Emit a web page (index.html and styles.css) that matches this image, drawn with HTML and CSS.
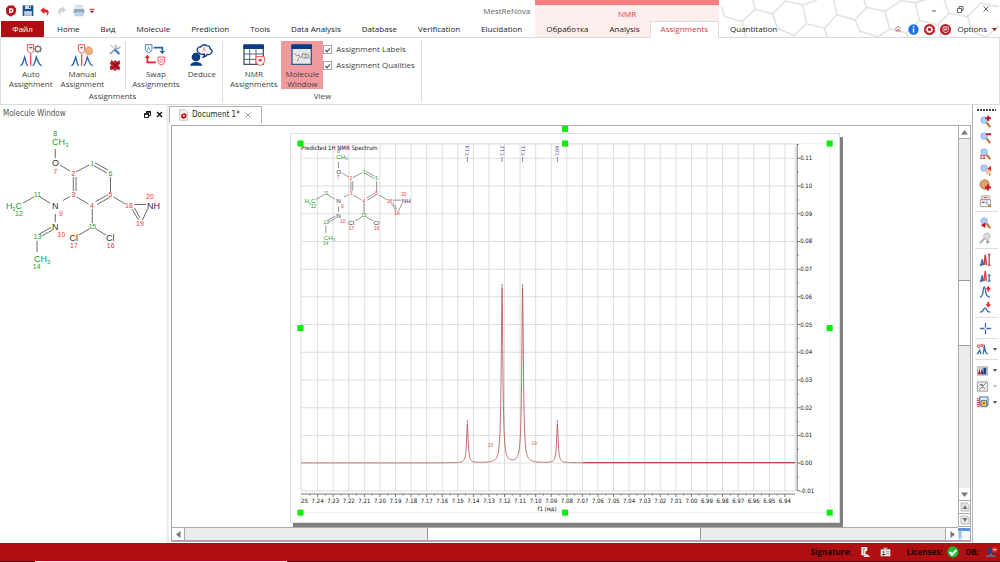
FILE: index.html
```html
<!DOCTYPE html>
<html lang="en">
<head>
<meta charset="utf-8">
<title>MestReNova</title>
<link rel="stylesheet" href="styles.css">
</head>
<body>
<div class="app">
  <header class="header">
    <div class="header-part main-part">
      <div class="title-row">
        <div class="quick">
          <svg width="14" height="14" viewBox="10 9 42 42"><path d="M22 14l16-1 9 11-3 15-14 8-13-9-1-15z" fill="#b5121b"/><path d="M27 37V24h7q5 4 0 9h-6" fill="none" stroke="#fff" stroke-width="4"/></svg>
          <button class="icon-btn" aria-label="Save"><svg width="14" height="14" viewBox="62 9 42 42"><path d="M67 13h32v32H67z" fill="#1f4e8c"/><path d="M74 13h18v11H74z" fill="#cfe0f2"/><path d="M86 15h4v7h-4z" fill="#1f4e8c"/><path d="M71 30h24v15H71z" fill="#9db9d6"/><path d="M74 34h18M74 39h18" stroke="#eef" stroke-width="2"/></svg></button>
          <button class="icon-btn" aria-label="Undo"><svg width="14" height="14" viewBox="113 9 42 42"><path d="M120 28l12-9v6c14-2 18 12 6 21 5-9 2-13-6-12v6z" fill="#e5252b"/></svg></button>
          <button class="icon-btn" aria-label="Redo"><svg width="14" height="14" viewBox="162 9 42 42"><path d="M194 26l-10-9v5c-15-1-17 14-5 20-4-8-2-12 5-11v5z" fill="#d4d4d4" stroke="#bbb"/></svg></button>
          <button class="icon-btn" aria-label="Print"><svg width="14" height="14" viewBox="214 9 42 42"><path d="M225 13h20v12h-20z" fill="#dce9f7" stroke="#9ab"/><path d="M219 24h32v13h-32z" fill="#9aa9b8"/><path d="M226 33h18l4 12h-26z" fill="#b9d7f4" stroke="#9ab"/></svg></button>
          <button class="icon-btn narrow" aria-label="Customize"><svg width="6" height="6" viewBox="0 0 18 18"><path d="M2 2h14v3H2zM2 8h14l-7 8z" fill="#a3262c"/></svg></button>
        </div>
        <span class="app-name">MestReNova</span>
      </div>
      <nav class="tabs">
        <button class="tab file">Файл</button>
        <button class="tab">Home</button><button class="tab">Вид</button><button class="tab">Molecule</button><button class="tab">Prediction</button><button class="tab">Tools</button><button class="tab">Data Analysis</button><button class="tab">Database</button><button class="tab">Verification</button><button class="tab">Elucidation</button>
      </nav>
    </div>
    <div class="header-part context">
      <div class="title-row context-name">NMR</div>
      <nav class="tabs"><button class="tab">Обработка</button><button class="tab">Analysis</button><button class="tab active">Assignments</button></nav>
    </div>
    <div class="header-part rest">
      <svg class="honeycomb" viewBox="0 0 840 112"><g fill="none" stroke="#e3e3e3" stroke-width="5"><path d="M0 20L10 50L63 65L103 28L95 0M63 65L75 112M103 28L155 42"/><path transform="translate(150 0)" d="M45 3L5 42L20 85L70 108L108 72L97 15L45 3L40 -5M97 15L140 0M108 72L163 85L200 45L190 0M163 85L170 112M200 45L255 60L290 22L280 -5M255 60L270 95L325 112L360 88L345 35L290 22M345 35L395 2L437 8L450 62L410 100L360 88M437 8L470 -2M410 100L415 112M450 62L505 75L540 40L525 0M505 75L515 112M540 40L595 50L635 10L690 20M595 50L610 95L650 112L690 80"/></g></svg>
      <div class="title-row window-buttons">
        <button class="icon-btn" aria-label="Minimize"><svg width="8" height="8" viewBox="0 0 8 8"><path d="M2 6h4" stroke="#555"/></svg></button>
        <button class="icon-btn" aria-label="Restore"><svg width="8" height="8" viewBox="0 0 8 8"><path d="M1.500 3.500h4v4h-4zM3 3V1.500h4v4H6" fill="none" stroke="#666"/></svg></button>
        <button class="icon-btn" aria-label="Close"><svg width="8" height="8" viewBox="0 0 8 8"><path d="M1.500 1.500l5 5m0-5l-5 5" stroke="#666"/></svg></button>
      </div>
      <div class="tabs">
        <button class="tab">Quantitation</button>
        <div class="tab-tools">
          <button class="icon-btn" aria-label="Collapse ribbon"><svg width="10" height="10" viewBox="0 0 30 30"><path d="M6 15l9-8 9 8M7 21h16M9 21l6-6 6 6" fill="none" stroke="#b5393f" stroke-width="2"/></svg></button>
          <button class="icon-btn" aria-label="Info"><svg width="11" height="11" viewBox="0 0 32 32"><circle cx="16" cy="16" r="15" fill="#1a73e8"/><path d="M16 13v12M16 6v4" stroke="#fff" stroke-width="4"/></svg></button>
          <button class="icon-btn" aria-label="Settings"><svg width="11" height="11" viewBox="0 0 32 32"><circle cx="16" cy="16" r="16" fill="#b81c25"/><circle cx="16" cy="16" r="7" fill="none" stroke="#fff" stroke-width="4"/><path d="M16 5v4M16 23v4M5 16h4M23 16h4M8 8l3 3M21 21l3 3M24 8l-3 3M11 21l-3 3" stroke="#fff" stroke-width="3"/></svg></button>
          <button class="icon-btn" aria-label="Log"><svg width="11" height="11" viewBox="0 0 32 32"><circle cx="16" cy="16" r="16" fill="#b81c25"/><path d="M9 8h15v14l-6 3h-5l-4-4z" fill="none" stroke="#fff" stroke-width="2"/><path d="M12 12h9M12 16h9M12 20h6" stroke="#fff" stroke-width="2"/></svg></button>
          <button class="options">Options <svg width="5" height="3" viewBox="0 0 10 6"><path d="M0 0h10l-5 6z" fill="#a3161c"/></svg></button>
        </div>
      </div>
    </div>
  </header>

  <section class="ribbon" aria-label="Assignments ribbon">
    <div class="group">
      <div class="group-items">
        <button class="big"><svg width="24" height="24" viewBox="59 129 72 72"><path d="M63 197c8-2 9-14 13-26 4 12 4 24 10 26M100 197c6-2 7-14 11-26 4 12 8 24 16 26" fill="none" stroke="#2565ae" stroke-width="4"/><path d="M94 163v34" stroke="#f04a50" stroke-width="4"/><path d="M84 134h19v18q-3 7-9 8-9-3-10-9z" fill="#fff" stroke="#f0555a" stroke-width="3"/><path d="M90 143h9" stroke="#e5252b" stroke-width="4"/><circle cx="116" cy="147" r="8" fill="#fff" stroke="#7b7b7b" stroke-width="4"/><path d="M116 134v5M116 155v5M103 147h5M124 147h5M107 138l3 3M122 153l3 3M125 138l-3 3M110 153l-3 3" stroke="#7b7b7b" stroke-width="3"/></svg><span>Auto<br>Assignment</span></button>
        <button class="big"><svg width="24" height="24" viewBox="212 129 72 72"><path d="M216 197c8-2 9-14 13-26 4 12 4 24 10 26M253 197c6-2 7-14 11-26 4 12 8 24 16 26" fill="none" stroke="#2565ae" stroke-width="4"/><path d="M247 163v34" stroke="#f04a50" stroke-width="4"/><path d="M237 134h19v18q-3 7-9 8-9-3-10-9z" fill="#fff" stroke="#f0555a" stroke-width="3"/><path d="M243 143h7" stroke="#e5252b" stroke-width="4"/><path d="M254 143q4-4 9 3l2-6q6-2 14 8v12l-10 5q-9-1-12-9l4-2z" fill="#f0b27c" stroke="#cf8a50" stroke-width="2"/></svg><span>Manual<br>Assignment</span></button>
        <div class="stack">
          <button class="icon-btn" aria-label="Assignment settings"><svg width="13" height="13" viewBox="330 128 39 39"><path d="M335 134l10 10" stroke="#8a98a5" stroke-width="3"/><path d="M333 161l18-17" stroke="#8a98a5" stroke-width="5"/><path d="M347 147l14 14" stroke="#3b82d6" stroke-width="7"/><path d="M351 133q-3 8 2 11 7 2 11-5" fill="none" stroke="#a7b3bd" stroke-width="5"/></svg></button>
          <button class="icon-btn" aria-label="Delete assignments"><svg width="13" height="13" viewBox="330 176 39 39"><path d="M337 179l7 5 5-5 5 5 8-4 1 11-4 4 4 6-2 9-8-3-5 6-5-6-8 3-3-9 5-6-4-5z" fill="#b3121a"/><path d="M342 188l14 14M356 188l-14 14" stroke="#8a0c13" stroke-width="3"/><path d="M346 185h6M346 205h6M339 192v6M359 192v6" stroke="#f3d5d6" stroke-width="1"/></svg></button>
        </div>
        <div class="rule"></div>
        <button class="big"><svg width="24" height="24" viewBox="433 129 72 72"><path d="M437 134h20v15q-3 8-10 9-9-3-10-10z" fill="#fff" stroke="#4f83bd" stroke-width="3"/><path d="M443 151l4-10 4 10" fill="none" stroke="#4f83bd" stroke-width="2"/><path d="M462 143h26v14" fill="none" stroke="#1d62b5" stroke-width="5"/><path d="M480 153h16l-8 9z" fill="#1d62b5"/><path d="M443 171v16h26" fill="none" stroke="#e5252b" stroke-width="5"/><path d="M435 174h16l-8-10z" fill="#e5252b"/><path d="M475 171h20v15q-3 8-10 9-9-3-10-10z" fill="#fff" stroke="#f0555a" stroke-width="3"/><path d="M481 178h8v8h-8z" fill="none" stroke="#f0555a" stroke-width="2"/></svg><span>Swap<br>Assignments</span></button>
        <button class="big"><svg width="24" height="24" viewBox="569 129 72 72"><circle cx="587" cy="171" r="13" fill="#0b3c85"/><path d="M569 197q2-11 18-12 17 1 19 12z" fill="#0b3c85"/><path d="M597 160q-10-7-5-15 3-5 9-4 8-11 18-4 10 0 10 9 10 5 4 13-4 7-12 4-4 7-12 8 5-5 3-9-9 3-15-2z" fill="#fff" stroke="#0b3c85" stroke-width="4"/><path d="M604 156q6 0 7-14 2 14 8 14" fill="none" stroke="#f0555a" stroke-width="2"/></svg><span>Deduce</span></button>
      </div>
      <div class="group-name">Assignments</div>
    </div>
    <div class="group view">
      <div class="group-items">
        <button class="big"><svg width="24" height="24" viewBox="65 129 72 72"><path d="M71 136h58v57H71z" fill="#fff" stroke="#48566a" stroke-width="4"/><path d="M71 162h58M71 178h58M88 148v45M107 148v45" stroke="#5a6675" stroke-width="3"/><path d="M69 137q0-4 4-4h54q4 0 4 4v10H69z" fill="#0b3c85"/><path d="M107 170h25v16q-4 9-12 11-11-4-13-12z" fill="#fff" stroke="#f0555a" stroke-width="3"/><path d="M113 184l3-6h10l-3 6z" fill="#e5252b"/></svg><span>NMR<br>Assignments</span></button>
        <button class="big on"><svg width="24" height="24" viewBox="209 129 72 72"><path d="M215 136h58v57H215z" fill="#e7e7e7" stroke="#375a8e" stroke-width="4"/><path d="M213 137q0-4 4-4h54q4 0 4 4v10H213z" fill="#0b3c85"/><path d="M222 160l7 7 7-2 4 7 6-3v-8l8 1 3 7-4 6-7-3M254 162l9 1 2 6-4 6-8-3M236 172l-5 12M265 172l6 4" fill="none" stroke="#666" stroke-width="2"/></svg><span>Molecule<br>Window</span></button>
        <div class="checks">
          <label><input type="checkbox" checked>Assignment Labels</label>
          <label><input type="checkbox" checked>Assignment Qualities</label>
        </div>
      </div>
      <div class="group-name">View</div>
    </div>
  </section>

  <main class="workspace">
    <aside class="dock">
      <div class="dock-title"><span>Molecule Window</span>
        <button class="icon-btn" aria-label="Float"><svg width="7" height="7" viewBox="0 0 7 7"><path d="M.500 3h4v3.500h-4zM2.500 2V.500h4v4H5" fill="none" stroke="#111"/><path d="M0 3h5M2 1h5" stroke="#111" stroke-width="1.500"/></svg></button>
        <button class="icon-btn" aria-label="Close panel"><svg width="7" height="7" viewBox="0 0 7 7"><path d="M1 1l5 5m0-5L1 6" stroke="#111" stroke-width="1.400"/></svg></button>
      </div>
      <svg class="molecule-view" viewBox="0 122 166 150">
        <g id="molecule">
          <path class="bond" d="M55.300 148v9M60 164l10 6M76 171l13-7M95 161.800l13 7.200M94 164.800l13 7.200M110.500 176v15M108 193.700l-12.500 7M109.500 196.500l-12.500 7M73.300 176v14M76 176v14M76.500 196l12 7M70 195.500l-7 4M50 202l-10-6M34 196l-11 6M55.300 213v8M51 226.500l-11.500 6.500M52.500 229l-11 6M37 240v11M92.300 208v14M89 228l-10 6M96 228l10 6M113.500 196l12 7M134 203.500h12M147.500 208l-5 11M132 208l6.500 11M134.500 207l5.500 10"/>
          <g class="atom green"><text x="52" y="144">CH</text><text class="sub" x="65" y="146">3</text><text x="6" y="208">H</text><text class="sub" x="12" y="210">3</text><text x="15.500" y="208">C</text><text x="34" y="261">CH</text><text class="sub" x="47" y="263">3</text></g>
          <g class="atom"><text x="52" y="165">O</text><text x="52" y="208">N</text><text x="52" y="229">N</text><text x="69.500" y="240">Cl</text><text x="106" y="240">Cl</text></g>
          <g class="atom amine"><text x="147" y="208">NH</text></g>
          <g class="num green"><text x="55.300" y="135">8</text><text x="92.300" y="165">1</text><text x="110.500" y="175">6</text><text x="37.500" y="196">11</text><text x="19" y="215">12</text><text x="37.500" y="238">13</text><text x="36.700" y="268">14</text><text x="92.300" y="228">15</text></g>
          <g class="num red"><text x="55.300" y="173">7</text><text x="73.500" y="175">2</text><text x="73.500" y="196">3</text><text x="92" y="207">4</text><text x="110.500" y="196">5</text><text x="61" y="215">9</text><text x="61.500" y="236">10</text><text x="74" y="247">17</text><text x="110.700" y="247">16</text><text x="129" y="207">18</text><text x="140" y="225">19</text><text x="150" y="198">20</text></g>
        </g>
      </svg>
    </aside>

    <section class="documents">
      <div class="doc-tabs">
        <div class="doc-tab">
          <svg width="9" height="12" viewBox="537 22 28 37"><path d="M539 24h17l7 7v26h-24z" fill="#f8f4f4" stroke="#b9a3a3" stroke-width="2"/><path d="M545 38l9-4 7 6-2 9-9 4-7-6z" fill="#c01822"/><circle cx="552" cy="43" r="3" fill="#fff"/></svg>
          <span>Document 1*</span>
          <button class="icon-btn" aria-label="Close document"><svg width="6" height="6" viewBox="0 0 6 6"><path d="M.500.500l5 5m0-5l-5 5" stroke="#999"/></svg></button>
        </div>
      </div>
      <div class="frame">
        <div class="canvas">
          <div class="page">
            <svg class="plot" viewBox="291 133 548 388" role="img" aria-label="Predicted 1H NMR Spectrum">
              <path class="faint" d="M301 142.500h529v369H301z"/>
              <g id="grid"></g>
              <text class="caption" x="301" y="149">Predicted 1H NMR Spectrum</text>
              <use href="#molecule" transform="translate(300.300 58.700) scale(.69)"/>
              <g id="peaks"></g>
              <path id="trace" class="trace"/>
              <path class="trace heavy" d="M583 461.500H795"/>
              <g class="assign"><text x="490.500" y="446">20</text><text x="534" y="444">19</text></g>
              <text class="tick" x="547" y="510" text-anchor="middle">f1 (мд)</text>
              <g id="handles" class="handle"></g>
            </svg>
          </div>
        </div>
        <div class="vbar">
          <button class="sb" aria-label="Scroll up"><svg width="7" height="5" viewBox="0 0 7 5"><path d="M0 4.500h7L3.500 0z"/></svg></button>
          <div class="track a"></div><div class="thumb"></div><div class="track b"></div>
          <button class="sb" aria-label="Scroll down"><svg width="7" height="5" viewBox="0 0 7 5"><path d="M0 .500h7L3.500 5z"/></svg></button>
          <button class="sb pg" aria-label="Previous page"><svg width="10" height="10" viewBox="0 0 10 10"><path class="sheet" d="M1 1h6l2 2v6H1z"/><path d="M2.500 7h5L5 3z"/></svg></button>
          <button class="sb pg" aria-label="Next page"><svg width="10" height="10" viewBox="0 0 10 10"><path class="sheet" d="M1 1h6l2 2v6H1z"/><path d="M2.500 3h5L5 7z"/></svg></button>
        </div>
        <div class="hbar">
          <button class="sb" aria-label="Scroll left"><svg width="5" height="7" viewBox="0 0 5 7"><path d="M4.500 0v7L0 3.500z"/></svg></button>
          <div class="track a"></div><div class="thumb"></div><div class="track b"></div>
          <button class="sb" aria-label="Scroll right"><svg width="5" height="7" viewBox="0 0 5 7"><path d="M.500 0v7L5 3.500z"/></svg></button>
        </div>
        <button class="corner" aria-label="Page navigator"><svg width="12" height="12" viewBox="0 0 12 12"><path fill="#5b93dc" d="M0 0h12v3H0z"/><path fill="#c9dcf3" d="M0 3h4v9H0z"/><path fill="#f4f8fd" d="M4 3h7v8H4z"/><path d="M1 5h2M1 8h2" stroke="#6d7f95"/></svg></button>
      </div>
    </section>

    <nav class="toolbar" aria-label="Zoom tools">
      <div class="grip"></div>
      <button aria-label="Zoom in"><svg viewBox="0 0 14 14"><g id="lens"><path d="M8 8l4 5" stroke="#c07030" stroke-width="2.200"/><circle cx="5.500" cy="5.500" r="3.600" fill="#a9cdf5" stroke="#8fb2da" stroke-width=".8"/></g><path d="M10 .500v6M7 3.500h6" stroke="#c3121c" stroke-width="2"/></svg></button>
      <button aria-label="Zoom out"><svg viewBox="0 0 14 14"><use href="#lens"/><path d="M7.500 3.500h5.500" stroke="#c3121c" stroke-width="2"/></svg></button>
      <button aria-label="Full spectrum"><svg viewBox="0 0 14 14"><use href="#lens"/><path d="M1.500 9.500h2M4.500 9.500h2M1.500 12h2M4.500 12h2" stroke="#d22a32" stroke-width="1.600"/></svg></button>
      <button aria-label="Manual zoom"><svg viewBox="0 0 14 14"><use href="#lens"/><path d="M7 8l4-1 2 3-2 3-3-1z" fill="#f3c9a3"/><path d="M9 6l4-3v6z" fill="#e5252b"/></svg></button>
      <button aria-label="Panning"><svg viewBox="0 0 14 14"><path d="M1 6q0-4 4-5 5-1 6 4v4q-3 3-6 2-4-2-4-5z" fill="#dca070" stroke="#a86a3c" stroke-width=".8"/><path d="M9.500 6v6.500M6.500 9.200h6.500" stroke="#c3121c" stroke-width="2"/></svg></button>
      <button aria-label="Expansion"><svg viewBox="0 0 14 14"><path d="M3 1h8v4H3zM1.500 5h11v7.500h-11z" fill="#fafafa" stroke="#999"/><path d="M5 3h4M3 8h3" stroke="#d22a32" stroke-width="1.200"/><circle cx="8" cy="8" r="2" fill="#a9cdf5"/><path d="M9.500 10l3 3" stroke="#c07030" stroke-width="1.600"/></svg></button>
      <hr>
      <button aria-label="Previous zoom"><svg viewBox="0 0 14 14"><use href="#lens"/><path d="M2 10l5-3v6z" fill="#c3121c"/></svg></button>
      <button aria-label="Next zoom"><svg viewBox="0 0 14 14"><path d="M6 7l-5 5" stroke="#aaa" stroke-width="2"/><circle cx="8.500" cy="4.500" r="3.500" fill="#ddd" stroke="#bbb"/><path d="M8 8l4 2.500L8 13z" fill="#999"/></svg></button>
      <hr>
      <button aria-label="Fit to height"><svg viewBox="0 0 14 14"><path d="M1 13h1.500l1-6 1 6 .5-2" fill="none" stroke="#3a6da8" stroke-width="1.800"/><path d="M5.500 13l1.200-11 1.300 11" fill="none" stroke="#c24048" stroke-width="1.600"/><path d="M11 2v11M9.500 1.500h3M9.500 13h3" stroke="#b8454b" stroke-width="1.400"/></svg></button>
      <button aria-label="Fit highest compound peak"><svg viewBox="0 0 14 14"><path d="M1 13h1.500l1-6 1 6 .5-2" fill="none" stroke="#3a6da8" stroke-width="1.800"/><path d="M5.500 13l1.200-11 1.300 11" fill="none" stroke="#e0484f" stroke-width="1.600"/><path d="M11 7v6M9.500 6.500h3M9.500 13h3" stroke="#3a6da8" stroke-width="1.400"/></svg></button>
      <button aria-label="Increase intensity"><svg viewBox="0 0 14 14"><path d="M1 13q3 0 3.500-7Q5.500-2 7 6q.5 7 5 7" fill="none" stroke="#3a6da8" stroke-width="1.400"/><path d="M10 1l3 3.500H7zM9 4h2v3H9z" fill="#e5252b"/></svg></button>
      <button aria-label="Decrease intensity"><svg viewBox="0 0 14 14"><path d="M1 12q3 0 4-3 1.500-3 3 0 1 3 4 3" fill="none" stroke="#3a6da8" stroke-width="1.400"/><path d="M10 7L7 3.500h6zM9 1h2v3H9z" fill="#e5252b"/></svg></button>
      <hr>
      <button aria-label="Crosshair"><svg viewBox="0 0 14 14"><path d="M7 1v5M7 8v5M1 7h5M8 7h5" stroke="#3a6da8" stroke-width="1.400"/></svg></button>
      <hr>
      <button class="menu" aria-label="Peak picking"><svg viewBox="0 0 14 14"><circle cx="3" cy="3.500" r="1.500" fill="none" stroke="#e5252b"/><circle cx="6.500" cy="2.500" r="1.200" fill="none" stroke="#e5252b"/><path d="M1 12q2-1 3-5 .5 4 1.500 5M7.500 12q1-2 1.500-10 .7 9 3.500 10" fill="none" stroke="#3a6da8" stroke-width="1.400"/></svg></button>
      <hr>
      <button class="menu" aria-label="Display mode"><svg viewBox="0 0 14 14"><path d="M1.500 3h11v9h-11z" fill="#ddd" stroke="#aaa"/><path d="M2 11l2-6 1 6z" fill="#c3121c"/><path d="M5 11l1.500-7L8 11zM8 4h3v7H8z" fill="#1d3f7c"/></svg></button>
      <button class="menu off" aria-label="Trace"><svg viewBox="0 0 14 14"><path d="M1.500 2h11v10h-11z" fill="#eee" stroke="#999"/><path d="M3 11l8-8M4 4l6 6M4 5h3v3" fill="none" stroke="#777"/></svg></button>
      <button class="menu" aria-label="Layout"><svg viewBox="0 0 14 14"><path d="M4 1h9v9H4z" fill="#dfeaf7" stroke="#3a6da8"/><path d="M1 3h3M1 5h3M1 7h3M1 9h3M1 11h3" stroke="#d22a32"/><path d="M5.500 5h6v6.500h-6z" fill="#ffcf3f" stroke="#3a6da8"/><path d="M7.500 7h2v2h-2z" fill="#e5252b"/></svg></button>
    </nav>
  </main>

  <footer class="status">
    <span>Signature:</span>
    <svg width="11" height="12" viewBox="0 0 33 36"><path d="M4 3h18v10l-6 4v11H4z" fill="#f6eeee"/><path d="M8 9h8M8 15h5M8 21h4" stroke="#666" stroke-width="3"/><path d="M14 27q6-8 9 0l6 2v4H10z" fill="#ddd"/></svg>
    <svg width="11" height="12" viewBox="0 0 33 36"><path d="M2 10h29v21H2z" fill="#e9e4e4"/><path d="M11 5h11v7H11z" fill="#bbb"/><circle cx="11" cy="18" r="3" fill="#666"/><path d="M6 27q5-7 10 0zM19 17h8M19 23h8" stroke="#666" stroke-width="2"/></svg>
    <span class="lic">Licenses:</span>
    <svg class="ok" width="12" height="12" viewBox="0 0 36 36"><circle cx="18" cy="18" r="17" fill="#2bb431" stroke="#0c8a19"/><path d="M8 18l7 8 13-14" fill="none" stroke="#fff" stroke-width="6"/></svg>
    <span>DB:</span>
    <svg class="db" width="13" height="12" viewBox="0 0 39 36"><path d="M9 4h18v18H9z" fill="#1e3f78"/><path d="M18 22v6M4 30h28" stroke="#5076b4" stroke-width="5"/><circle cx="29" cy="11" r="9" fill="#e5252b"/><path d="M24 11h10" stroke="#fff" stroke-width="3"/></svg>
  </footer>
  <div class="edge"></div>
</div>
<script src="plot.js"></script>
</body>
</html>
```
FILE: styles.css
```css
* { box-sizing: border-box; }
body { margin: 0; background: #fff; color: #2b2b2b; font: 8px/10px "Open Sans", "Noto Sans", sans-serif; }
button { margin: 0; padding: 0; border: 0; background: none; color: inherit; font: inherit; }
svg { display: block; flex: none; }
.app { display: flex; flex-direction: column; min-height: 100vh; }
.icon-btn { display: grid; place-items: center; }

/* title bar and ribbon tabs */
.header { display: flex; }
.header-part { display: flex; flex-direction: column; }
.title-row { display: flex; align-items: center; height: 21px; }
.quick { display: flex; align-items: center; gap: 3px; padding-left: 4px; }
.app-name { margin-left: auto; padding-right: 5px; color: #666; }
.tabs { display: flex; height: 17px; border-bottom: 1px solid #dcdcdc; white-space: nowrap; }
.main-part .tabs { padding-right: 3px; }
.tab { padding: 0 10px 0 11px; color: #222; }
.tab.file { width: 43px; margin: 0 2px 0 1px; padding: 0; background: #b00f12; color: #fff; }
.context { background: #ffeeee; border-top: 5px solid #fa7d7d; }
.context .title-row { height: 16px; }
.context-name { justify-content: center; padding-top: 2px; color: #d8383e; }
.context .tab.active { margin-bottom: -1px; border: 1px solid #dcdcdc; border-bottom: 0; background: #fff; color: #d8383e; padding: 0 10px 2px; }
.rest { flex: 1; position: relative; }
.honeycomb { position: absolute; right: 0; top: 0; width: 280px; height: 37px; z-index: -1; }
.window-buttons { justify-content: flex-end; gap: 18px; padding: 0 10px 4px 0; }
.rest .tab { padding-left: 11px; }
.tab-tools { display: flex; align-items: center; gap: 5px; margin-left: auto; padding-right: 3px; }
.options { display: flex; align-items: center; gap: 5px; margin-left: 1px; }

/* ribbon */
.ribbon { display: flex; height: 67px; border: 1px solid #dcdcdc; border-top: 0; padding: 3px 0 2px; color: #444; }
.group { display: flex; flex-direction: column; border-right: 1px solid #dcdcdc; padding: 0 6px 0 8px; }
.group-items { display: flex; gap: 8px; height: 48px; }
.group-name { padding-top: 2px; text-align: center; }
.big { display: flex; flex-direction: column; align-items: center; gap: 2px; padding-top: 2px; text-align: center; }
.big.on { background: #f09a9d; padding: 2px 4px 0; margin-left: -4px; }
.stack { display: flex; flex-direction: column; gap: 3px; padding-top: 2px; margin: 0 -5px 0 -3px; }
.rule { width: 1px; margin-right: -2px; background: #dcdcdc; }
.group.view { padding-left: 7px; }
.checks { display: flex; flex-direction: column; gap: 6px; padding-top: 3px; margin-left: -8px; }
.checks label { display: flex; align-items: center; gap: 4px; }
.checks input { appearance: none; width: 9px; height: 9px; margin: 0; border: 1px solid #aaa; background: #fff; display: grid; place-items: center; }
.checks input:checked::after { content: ""; width: 2px; height: 4px; border: solid #444; border-width: 0 1px 1px 0; transform: rotate(40deg); }

/* workspace */
.workspace { flex: 1; display: flex; }
.dock { flex: 0 0 169px; border-right: 3px solid #f0f0f0; }
.dock-title { display: flex; align-items: center; gap: 5px; height: 18px; padding: 0 3px; font-family: "DejaVu Sans Condensed", "DejaVu Sans", sans-serif; color: #555; }
.dock-title span { margin-right: auto; }
.molecule-view { width: 100%; }
.documents { flex: 1; display: flex; flex-direction: column; min-width: 0; }
.doc-tabs { display: flex; height: 18px; margin-bottom: 2px; }
.doc-tab { display: flex; align-items: center; gap: 4px; width: 93px; margin-top: 1px; padding-left: 9px; border: 1px solid #b0b0b0; border-bottom: 0; font-family: "DejaVu Sans Condensed", "DejaVu Sans", sans-serif; white-space: nowrap; }
.doc-tab .icon-btn { margin-left: 1px; }
.frame { flex: 1; display: grid; grid-template: 1fr 13px / 1fr 12px; margin: 0 1px 1px 2px; border: 1px solid #a9a9b1; border-width: 1px 1px 2px 1px; }
.canvas { display: flex; justify-content: center; align-items: flex-start; padding-top: 7px; min-width: 0; }
.page { width: 70%; background: #fff; border: 1px solid #ddd; box-shadow: 3px 4px 0 #808080; }
.plot { width: 100%; overflow: visible; }
.vbar, .hbar { display: flex; background: #ececec; }
.vbar { flex-direction: column; border-left: 1px solid #aaa; }
.hbar { border-top: 1px solid #aaa; }
.sb { display: grid; place-items: center; flex: 0 0 13px; background: #fff; border: 0 solid #aaa; }
.sb path { fill: #777; }
.sb .sheet { fill: #e8e8e8; stroke: #bbb; }
.vbar .sb { border-bottom-width: 1px; }
.hbar .sb:first-child { border-right-width: 1px; }
.hbar .sb:last-child { border-left-width: 1px; }
.track.a { flex: 143; }
.track.b { flex: 144; }
.vbar .thumb { flex: 65; background: #fff; border: solid #999; border-width: 1px 0; }
.hbar .thumb { flex: 161; background: #fff; border: solid #999; border-width: 0 1px; }
.corner { display: grid; place-items: center; }

/* side toolbar */
.toolbar { display: flex; flex-direction: column; flex: 0 0 28px; padding: 4px 2px 0; border-left: 1px solid #b5b5b5; }
.grip { height: 2px; margin: 0 2px 2px; background: repeating-linear-gradient(90deg, #444 0 2px, #fff 2px 3px); }
.toolbar button { position: relative; height: 16px; padding-left: 4px; }
.toolbar button svg { width: 13px; height: 13px; }
.toolbar button.menu { padding-left: 1px; }
.toolbar .menu::after { content: ""; position: absolute; right: 1px; top: 7px; border: solid transparent; border-width: 3px 2px 0; border-top-color: #555; }
.toolbar .off::after { border-top-color: #bbb; }
.toolbar hr { width: 100%; height: 1px; margin: 2px 0; border: 0; background: #ddd; }

/* molecule drawing */
.bond { fill: none; stroke: #444; stroke-width: .8; }
.atom { font: 9px "Liberation Sans", Arial, sans-serif; fill: #333; }
.atom .sub { font-size: 6px; }
.num { font: 7px "Liberation Sans", Arial, sans-serif; text-anchor: middle; }
.green { fill: #259a2a; }
.red { fill: #ff3030; }
.amine { fill: #3a2457; }

/* spectrum */
.plot text { font-family: "DejaVu Sans Condensed", "DejaVu Sans", sans-serif; }
.caption { font-size: 6px; fill: #111; }
.tick { font-size: 6px; fill: #111; }
.gridline { stroke: #dedede; fill: none; }
.faint { stroke: #f0f0f0; fill: none; }
.axis { stroke: #777; fill: none; }
.trace { stroke: #b04a4a; stroke-width: .8; fill: none; }
.heavy { stroke-width: 1; }
.shift { font-size: 5px; fill: #3c3c9c; }
.mark { stroke: #6a6ac0; stroke-width: .8; }
.assign { font-size: 5px; fill: #b5714a; text-anchor: middle; }
.handle { fill: #00f000; }

/* status bar */
.status { display: flex; align-items: center; justify-content: flex-end; gap: 9px; height: 18px; background: #b00f12; color: #160303; font-weight: 700; }
.status .lic { margin-left: 6px; }
.status .ok { margin-left: -4px; }
.status span + svg + span:not(.lic) { margin-left: -3px; }
.status .db { margin-left: -3px; margin-right: 2px; }
.edge { height: 1px; background: linear-gradient(90deg, #40080a 35px, #fff 35px 287px, #40080a 287px); }
```
FILE: plot.js
```js
const NS = "http://www.w3.org/2000/svg";
const add = (parent, tag, attrs, text) => {
  const el = document.createElementNS(NS, tag);
  for (const k in attrs) el.setAttribute(k, attrs[k]);
  if (text) el.textContent = text;
  parent.appendChild(el);
};

const left = 301, right = 795, top0 = 143, bottom = 490, axisY = 493, axisX = 797;
const xOf = ppm => 317.6 + (7.24 - ppm) * 1557;
const yOf = v => 462 - v * 2770;

const grid = document.getElementById("grid");
let lines = `M${left} ${top0}H${right}M${left} ${bottom}H${right}M${left} ${top0}V${bottom}M${right} ${top0}V${bottom}`;
let ticks = `M${left} ${axisY}H${right}M${axisX} ${top0}V${bottom}`;
for (let i = 0; i <= 30; i++) {
  const x = xOf(7.24 - i / 100);
  lines += `M${x} ${top0}V${bottom}`;
  ticks += `M${x} ${axisY}v3M${x - 7.8} ${axisY}v1.500`;
}
for (let i = -1; i <= 11; i++) {
  const y = yOf(i / 100);
  lines += `M${left} ${y}H${right}`;
  ticks += `M${axisX} ${y}h3M${axisX} ${y - 13.8}h1.500`;
}
add(grid, "path", { class: "gridline", d: lines });
add(grid, "path", { class: "axis", d: ticks });
add(grid, "text", { class: "tick", x: left, y: 502 }, "25");
for (let i = 0; i <= 30; i++) {
  const ppm = 7.24 - i / 100;
  add(grid, "text", { class: "tick", x: xOf(ppm), y: 502, "text-anchor": "middle" }, ppm.toFixed(2));
}
for (let i = -1; i <= 11; i++) {
  add(grid, "text", { class: "tick", x: 800, y: yOf(i / 100) + 2 }, (i / 100).toFixed(2));
}

const signals = [
  { x: 467.3, h: 39, label: "7.14" },
  { x: 502, h: 175, label: "7.12" },
  { x: 522.5, h: 175, label: "7.11" },
  { x: 557.3, h: 39, label: "7.09" }
];
let d = "";
for (let x = left; x <= right; x += 0.25) {
  let h = 0;
  for (const s of signals) h += s.h * 0.9 / (0.9 + (x - s.x) ** 2);
  d += (d ? "L" : "M") + x + " " + (461.8 - h).toFixed(2);
}
document.getElementById("trace").setAttribute("d", d);

const peaks = document.getElementById("peaks");
for (const s of signals) {
  add(peaks, "text", { class: "shift", transform: `translate(${s.x + 2} 155) rotate(-90)` }, s.label);
  add(peaks, "path", { class: "mark", d: `M${s.x} 156v5M${s.x} ${461.8 - s.h - 4}v3` });
}

const handles = document.getElementById("handles");
for (const [x, y] of [[300.5, 142.5], [565, 142.5], [829.5, 142.5], [300.5, 327], [829.5, 327], [300.5, 511.5], [565, 511.5], [829.5, 511.5], [565, 128]]) {
  add(handles, "rect", { x: x - 3, y: y - 3, width: 6, height: 6 });
}
```
